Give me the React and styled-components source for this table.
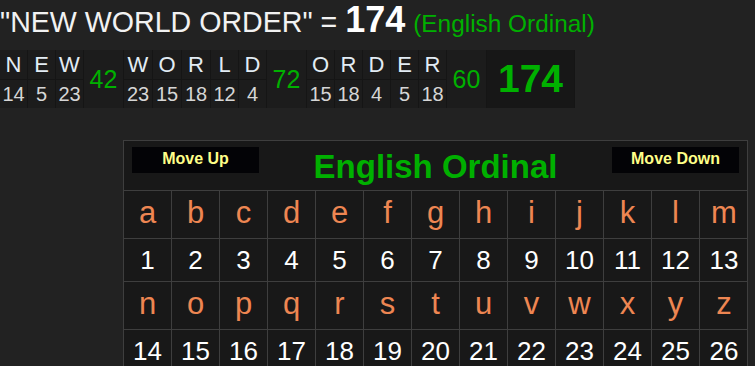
import React from "react";
import styled, { createGlobalStyle } from "styled-components";

const GlobalStyle = createGlobalStyle`
  html, body {
    margin: 0;
    padding: 0;
    background: #222222;
    font-family: "Liberation Sans", Arial, sans-serif;
  }
`;

const Page = styled.div`
  width: 755px;
  height: 366px;
  overflow: hidden;
  background: #222222;
`;

const Title = styled.div`
  height: 50px;
  font-size: 28.6px;
  line-height: 40px;
  color: #f2f2f2;
  white-space: nowrap;
`;

const Total = styled.span`
  font-size: 36px;
  font-weight: bold;
  color: #ffffff;
`;

const CipherLabel = styled.span`
  font-size: 24.4px;
  color: #00b000;
`;

const Breakdown = styled.div`
  display: flex;
  width: max-content;
  height: 58px;
  background: #1c1c1c;
`;

const LetterCol = styled.div`
  width: ${(p) => (p.$wide ? 29 : 28)}px;
  display: flex;
  flex-direction: column;
  border-right: 1px solid #151515;
  box-sizing: border-box;
`;

const LetterCell = styled.div`
  height: 30px;
  display: flex;
  align-items: center;
  justify-content: center;
  font-size: 22px;
  color: #e2ecf4;
  border-bottom: 1px solid #151515;
  box-sizing: border-box;
`;

const NumCell = styled.div`
  flex: 1;
  display: flex;
  align-items: center;
  justify-content: center;
  font-size: 20px;
  color: #d6d6d6;
`;

const SumCell = styled.div`
  width: ${(p) => (p.$total ? 88 : 40)}px;
  display: flex;
  align-items: center;
  justify-content: center;
  font-size: ${(p) => (p.$total ? 39 : 25)}px;
  font-weight: ${(p) => (p.$total ? "bold" : "normal")};
  color: #00b000;
  background: ${(p) => (p.$total ? "#171717" : "#1c1c1c")};
  border-right: 1px solid #151515;
  box-sizing: border-box;
`;

const CipherTable = styled.div`
  margin: 32px 0 0 123px;
  width: 625px;
  border: 1px solid #3e3e3e;
  border-bottom: none;
  background: #181818;
  box-sizing: border-box;
`;

const Header = styled.div`
  height: 50px;
  display: flex;
  justify-content: space-between;
  align-items: flex-start;
  padding: 6px 8px 0 8px;
  border-bottom: 1px solid #3e3e3e;
  box-sizing: border-box;
`;

const MoveButton = styled.button`
  width: 127px;
  height: 26px;
  background: #030306;
  border: none;
  padding: 0 0 3px 0;
  font-family: "Liberation Sans", Arial, sans-serif;
  font-size: 16px;
  font-weight: bold;
  color: #ffff88;
  cursor: pointer;
`;

const HeaderTitle = styled.div`
  font-size: 33px;
  font-weight: bold;
  color: #00b000;
  line-height: 37px;
  margin-top: 1px;
`;

const Grid = styled.div`
  display: grid;
  grid-template-columns: repeat(13, 48px);
`;

const GridCell = styled.div`
  height: ${(p) => (p.$kind === "letter" ? 48 : 43)}px;
  display: flex;
  align-items: center;
  justify-content: center;
  font-size: ${(p) => (p.$kind === "letter" ? 31 : 26)}px;
  color: ${(p) => (p.$kind === "letter" ? "#ee8652" : "#ffffff")};
  border-right: 1px solid #3e3e3e;
  border-bottom: 1px solid #3e3e3e;
  box-sizing: border-box;
  padding-bottom: ${(p) => (p.$kind === "letter" ? 3 : 0)}px;
  &:nth-child(13n) {
    border-right: none;
  }
`;

const words = [
  { letters: "NEW", sum: 42 },
  { letters: "WORLD", sum: 72 },
  { letters: "ORDER", sum: 60 },
];

const ord = (c) => c.toLowerCase().charCodeAt(0) - 96;

const alphabet = "abcdefghijklmnopqrstuvwxyz".split("");

export default function App() {
  const rows = [alphabet.slice(0, 13), alphabet.slice(13)];
  return (
    <Page>
      <GlobalStyle />
      <Title>
        "NEW WORLD ORDER" = <Total>174</Total> <CipherLabel>(English Ordinal)</CipherLabel>
      </Title>
      <Breakdown>
        {words.map((w, wi) => (
          <React.Fragment key={wi}>
            {w.letters.split("").map((ch, i) => (
              <LetterCol key={i} $wide={wi === 1 && i < 3}>
                <LetterCell>{ch}</LetterCell>
                <NumCell>{ord(ch)}</NumCell>
              </LetterCol>
            ))}
            <SumCell>{w.sum}</SumCell>
          </React.Fragment>
        ))}
        <SumCell $total>174</SumCell>
      </Breakdown>
      <CipherTable>
        <Header>
          <MoveButton>Move Up</MoveButton>
          <HeaderTitle>English Ordinal</HeaderTitle>
          <MoveButton>Move Down</MoveButton>
        </Header>
        <Grid>
          {rows.map((row, ri) => (
            <React.Fragment key={ri}>
              {row.map((ch) => (
                <GridCell key={ch} $kind="letter">{ch}</GridCell>
              ))}
              {row.map((ch) => (
                <GridCell key={ch + "n"} $kind="number">{ord(ch)}</GridCell>
              ))}
            </React.Fragment>
          ))}
        </Grid>
      </CipherTable>
    </Page>
  );
}
